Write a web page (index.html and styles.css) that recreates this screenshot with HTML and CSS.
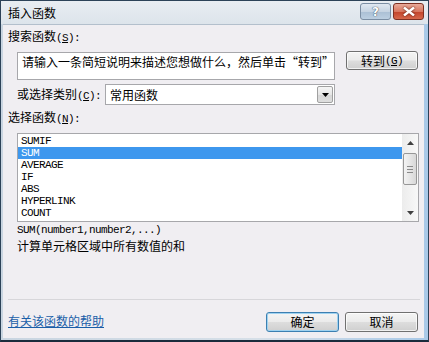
FILE: index.html
```html
<!DOCTYPE html>
<html lang="zh-CN">
<head>
  <meta charset="UTF-8" />
  <title>插入函数</title>
  <link rel="stylesheet" href="styles.css">
</head>
<body>
  <div class="window">
    <div class="titlebar">
      <span class="title">插入函数</span>
      <div class="caption-btns">
        <span class="cap help">?</span>
        <span class="cap close">
          <svg width="12" height="9" viewBox="0 0 12 9"><path d="M1 0.5 L11 8.5 M11 0.5 L1 8.5" stroke="#fff" stroke-width="2.4" fill="none"/></svg>
        </span>
      </div>
    </div>

    <div class="client">
      <div class="label">搜索函数<span class="acc">(<u>S</u>):</span></div>

      <div class="search-row">
        <div class="search-box">请输入一条简短说明来描述您想做什么，然后单击“转到”</div>
        <span class="btn go">转到<span class="acc">(<u>G</u>)</span></span>
      </div>

      <div class="cat-row">
        <span class="cat-label">或选择类别<span class="acc">(<u>C</u>):</span></span>
        <div class="select">
          <span class="select-text">常用函数</span>
          <span class="drop">
            <svg width="7" height="4" viewBox="0 0 7 4"><path d="M0 0 H7 L3.5 4 Z" fill="#000"/></svg>
          </span>
        </div>
      </div>

      <div class="label list-label">选择函数<span class="acc">(<u>N</u>):</span></div>

      <div class="listbox">
        <ul class="items">
          <li>SUMIF</li>
          <li class="selected">SUM</li>
          <li>AVERAGE</li>
          <li>IF</li>
          <li>ABS</li>
          <li>HYPERLINK</li>
          <li>COUNT</li>
        </ul>
        <div class="scrollbar">
          <span class="arrow up"><svg width="7" height="4" viewBox="0 0 7 4"><path d="M3.5 0 L7 4 H0 Z" fill="#404040"/></svg></span>
          <span class="thumb"><span class="grip"></span></span>
          <span class="arrow down"><svg width="7" height="4" viewBox="0 0 7 4"><path d="M0 0 H7 L3.5 4 Z" fill="#404040"/></svg></span>
        </div>
      </div>

      <div class="syntax">SUM(number1,number2,...)</div>
      <div class="desc">计算单元格区域中所有数值的和</div>

      <div class="footer">
        <a class="help-link" href="#">有关该函数的帮助</a>
        <div class="buttons">
          <span class="btn default">确定</span>
          <span class="btn">取消</span>
        </div>
      </div>
    </div>
  </div>
</body>
</html>
```

FILE: styles.css
```css
* {
  box-sizing: border-box;
}
html, body {
  margin: 0;
  padding: 0;
  width: 429px;
  height: 342px;
  overflow: hidden;
  background: #ffffff;
}
body {
  font-family: "Noto Sans CJK SC", "Liberation Sans", sans-serif;
  font-size: 12px;
  color: #000;
}
.window {
  width: 429px;
  height: 342px;
  display: flex;
  flex-direction: column;
  border: 1px solid #2c4258;
  border-bottom: 2px solid #1b2c3c;
  background: linear-gradient(90deg, #c9d5e1 0, #d6dfe8 60%, #a9c9e8 100%);
  padding: 0 4px 2px 2px;
}
.titlebar {
  height: 23px;
  display: flex;
  align-items: center;
  justify-content: space-between;
  background: linear-gradient(180deg, #e8edf2 0, #dde4eb 100%);
  margin: 0 -4px 0 -2px;
  padding: 0 4px 0 7px;
}
.title {
  line-height: 16px;
  color: #000;
}
.caption-btns {
  display: flex;
  gap: 2px;
  align-self: flex-start;
  margin-top: 2px;
}
.cap {
  display: flex;
  align-items: center;
  justify-content: center;
  height: 17px;
  border-radius: 3px;
}
.help {
  width: 31px;
  border: 1px solid #7b8ea3;
  background: linear-gradient(180deg, #e0e8f1 0, #c6d4e2 50%, #aabfd4 51%, #bccfe1 100%);
  color: #fff;
  font-family: "DejaVu Sans", sans-serif;
  font-weight: bold;
  font-size: 12px;
  text-shadow: 0 0 1px #35485c, 0 0 1px #35485c;
}
.close {
  width: 31px;
  border: 1px solid #7d3022;
  background: linear-gradient(180deg, #e9aa9a 0, #d87760 50%, #c2432a 51%, #d6684c 100%);
}
.close svg {
  filter: drop-shadow(0 0 1px #5a1c10);
}

.client {
  flex: 1;
  display: flex;
  flex-direction: column;
  background: #f0eef2;
  border-top: 1px solid #b3bfcc;
  padding: 3px 6px 0 5px;
}
.acc {
  font-family: "Liberation Mono", monospace;
  font-size: 11px;
  letter-spacing: -0.6px;
}
.label {
  line-height: 16px;
}
.search-row {
  display: flex;
  align-items: flex-start;
  margin: 5px 0 0 9px;
}
.search-box {
  width: 318px;
  height: 28px;
  margin-top: 1px;
  border: 1px solid #a7a7ab;
  background: #fff;
  padding: 1px 4px;
  line-height: 16px;
  white-space: nowrap;
  overflow: hidden;
}
.btn {
  display: flex;
  align-items: center;
  justify-content: center;
  width: 72px;
  height: 19px;
  border: 1px solid #707070;
  border-radius: 3px;
  background: linear-gradient(180deg, #f4f4f4 0, #ebebeb 48%, #dddddd 52%, #cfcfcf 100%);
  box-shadow: inset 0 0 0 1px rgba(255, 255, 255, 0.7);
  line-height: 16px;
}
.go {
  margin-left: 11px;
}
.cat-row {
  display: flex;
  align-items: center;
  margin: 4px 0 0 9px;
}
.cat-label {
  width: 88px;
  line-height: 16px;
}
.select {
  display: flex;
  align-items: center;
  justify-content: space-between;
  width: 230px;
  height: 21px;
  border: 1px solid #a7a7ab;
  background: #fff;
  padding: 0 1px 0 4px;
}
.drop {
  display: flex;
  align-items: center;
  justify-content: center;
  width: 16px;
  height: 17px;
  border: 1px solid #a0a0a0;
  border-radius: 2px;
  background: linear-gradient(180deg, #f5f5f5 0, #e6e6e6 50%, #d6d6d6 51%, #dedede 100%);
}
.list-label {
  margin-top: 4px;
}
.listbox {
  display: flex;
  width: 402px;
  height: 89px;
  margin: 6px 0 0 9px;
  border: 1px solid #a7a7ab;
  background: #fff;
}
.items {
  flex: 1;
  list-style: none;
  margin: 0;
  padding: 1px 0 0;
  font-family: "Liberation Mono", monospace;
  font-size: 11px;
  letter-spacing: -0.6px;
}
.items li {
  height: 12px;
  line-height: 12px;
  padding-left: 3px;
}
.items .selected {
  background: #3d97ee;
  color: #fff;
}
.scrollbar {
  width: 16px;
  display: flex;
  flex-direction: column;
  align-items: center;
  background: linear-gradient(90deg, #ececec 0, #f8f8f8 100%);
}
.arrow {
  display: flex;
  align-items: center;
  justify-content: center;
  height: 17px;
  width: 16px;
}
.thumb {
  display: flex;
  align-items: center;
  justify-content: center;
  width: 14px;
  height: 32px;
  margin-top: 2px;
  border: 1px solid #979797;
  border-radius: 2px;
  background: linear-gradient(90deg, #f3f3f3 0, #e6e6e6 50%, #d8d8d8 100%);
}
.grip {
  width: 6px;
  height: 7px;
  border-top: 1px solid #8a8a8a;
  border-bottom: 1px solid #8a8a8a;
  background: linear-gradient(180deg, transparent 2px, #8a8a8a 2px, #8a8a8a 3px, transparent 3px);
}
.down {
  margin-top: auto;
}
.syntax {
  margin: 2px 0 0 9px;
  height: 12px;
  line-height: 12px;
  font-family: "Liberation Mono", monospace;
  font-size: 11px;
  letter-spacing: -0.6px;
}
.desc {
  margin: 2px 0 0 9px;
  line-height: 16px;
}
.footer {
  margin-top: auto;
  display: flex;
  justify-content: space-between;
  align-items: flex-start;
  border-top: 1px solid #d7d6da;
  padding: 12px 0 6px;
  margin-right: -2px;
}
.help-link {
  margin-top: 1px;
  line-height: 16px;
  color: #1a5ea8;
  text-decoration: underline;
}
.buttons {
  display: flex;
  gap: 6px;
  margin-right: 2px;
}
.buttons .btn {
  width: 73px;
  height: 20px;
}
.default {
  border-color: #3c7fb1;
  box-shadow: inset 0 0 0 1px #9fd2f0;
}
```
